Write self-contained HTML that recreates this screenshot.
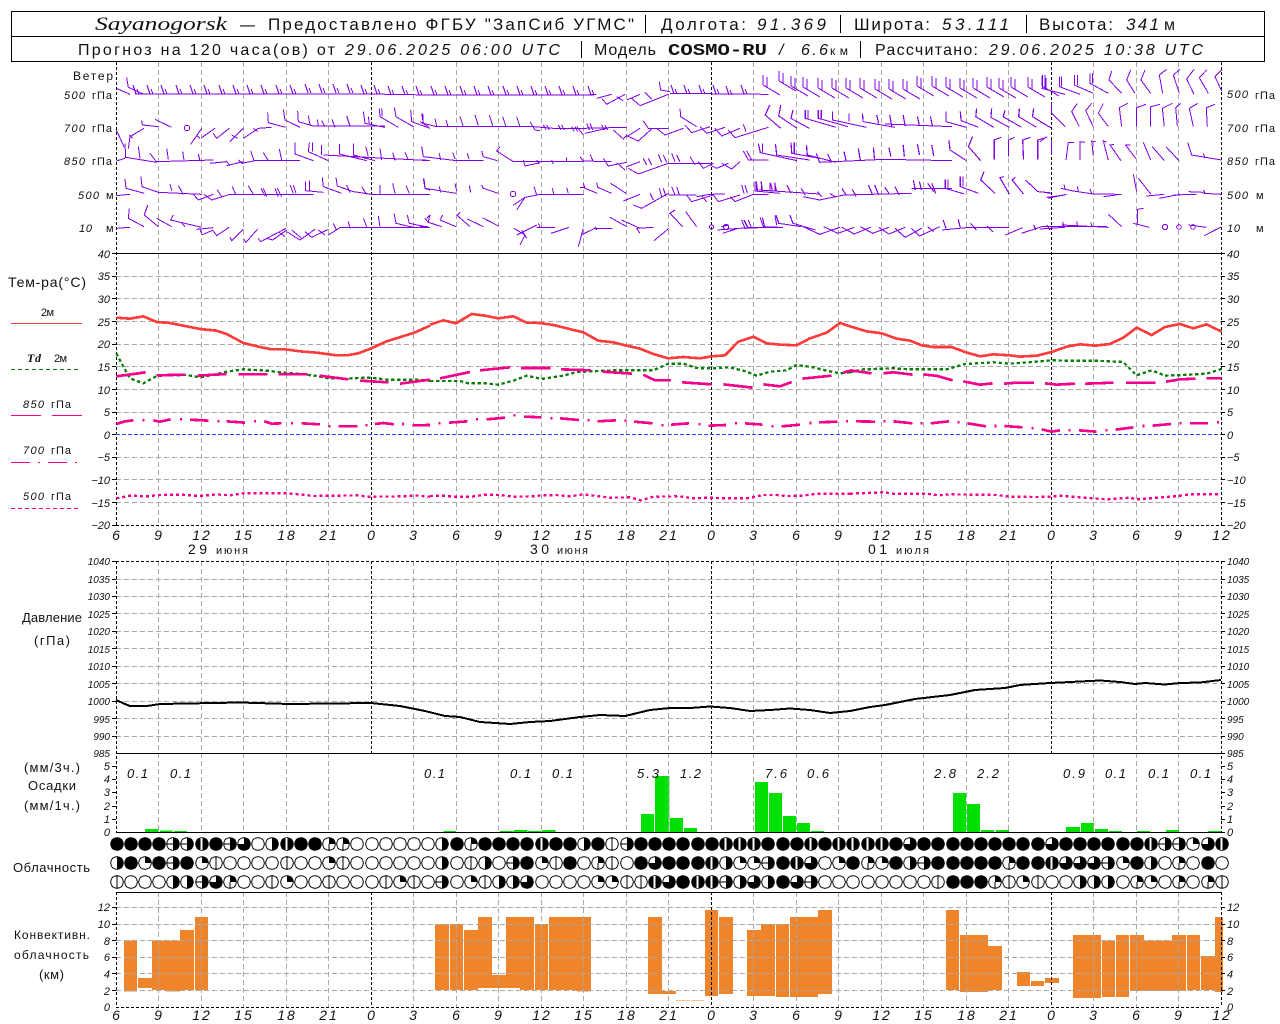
<!DOCTYPE html>
<html><head><meta charset="utf-8"><title>Sayanogorsk</title>
<style>
html,body{margin:0;padding:0;background:#fff}
svg{display:block}
text{font-family:"Liberation Sans",sans-serif;fill:#111}
.i{font-style:italic}
.n{font-size:11px;font-style:italic}
.p{font-size:10px;font-style:italic}
.a{font-size:14px;font-style:italic;text-anchor:middle;letter-spacing:2px}
.h{font-size:17px}
.s{font-size:16px}
.l{font-size:12px}
.f{fill:none}
</style></head><body>
<svg xmlns="http://www.w3.org/2000/svg" width="1280" height="1024" viewBox="0 0 1280 1024">
<defs>
<path id="v" d="M0 62V525M0 561V832M0 892V1007"/>
<path id="m" d="M0 62V525M0 561V753M0 892V1007"/>
<path id="t" d="M-1 0L-4-9M2 0L0-5"/>
<path id="d" d="M0 0L17 10M0 0V-10M4 2V-8"/>
<g id="c0"><circle r="6.3" fill="#fff" stroke="#000"/></g>
<g id="c1"><circle r="6.3" fill="#fff" stroke="#000"/><path d="M0-6V6" stroke="#000"/></g>
<g id="c2"><circle r="6.3" fill="#fff" stroke="#000"/><path d="M0 0V-6A6 6 0 0 1 6 0Z" fill="#000"/></g>
<g id="c3"><circle r="6.3" fill="#fff" stroke="#000"/><path d="M0 0V-6A6 6 0 0 1 6 0Z" fill="#000"/><path d="M0 0V6" stroke="#000"/></g>
<g id="c4"><circle r="6.3" fill="#fff" stroke="#000"/><path d="M0-6A6 6 0 0 1 0 6Z" fill="#000"/></g>
<g id="c5"><circle r="6.3" fill="#fff" stroke="#000"/><path d="M0-6A6 6 0 0 1 0 6Z" fill="#000"/><path d="M-6 0H0" stroke="#000"/></g>
<g id="c6"><circle r="6.3" fill="#fff" stroke="#000"/><path d="M0-6A6 6 0 1 1-6 0H0Z" fill="#000"/></g>
<g id="c7"><circle r="6.8" fill="#000"/><path d="M-.5-6V6" stroke="#fff" stroke-width="2"/></g>
<g id="c8"><circle r="6.8" fill="#000"/></g>
</defs>

<!-- header -->
<g shape-rendering="crispEdges" stroke="#000" fill="none">
<path d="M11.5 11.5H1264.5V61.5H11.5ZM11.5 36.5H1264.5"/>
<path d="M645.5 15V33M840.5 15V33M1026.5 15V33M581.5 41V58M860.5 41V58"/>
</g>
<g class="h">
<text x="95" y="30" font-size="19" textLength="132" lengthAdjust="spacingAndGlyphs" style="font-family:'Liberation Serif',serif;font-style:italic">Sayanogorsk</text>
<text x="240" y="30" textLength="15" lengthAdjust="spacingAndGlyphs" class="h">—</text>
<text x="268" y="30" class="h" textLength="366">Предоставлено ФГБУ "ЗапСиб УГМС"</text>
<text x="661" y="30" class="h" textLength="85">Долгота:</text>
<text x="757" y="30" class="h i" textLength="69">91.369</text>
<text x="854" y="30" class="h" textLength="76">Широта:</text>
<text x="942" y="30" class="h i" textLength="67">53.111</text>
<text x="1039" y="30" class="h" textLength="74">Высота:</text>
<text x="1126" y="30" class="h i" textLength="33">341</text>
<text x="1164" y="30" class="s" textLength="11">м</text>
</g>
<text x="78" y="55" class="s" textLength="257">Прогноз на 120 часа(ов) от</text>
<text x="345" y="55" class="s i" textLength="215">29.06.2025 06:00 UTC</text>
<text x="594" y="55" class="s" textLength="62">Модель</text>
<text x="668" y="55" font-size="17" font-weight="bold" textLength="99" lengthAdjust="spacingAndGlyphs" style="font-family:'Liberation Mono',monospace">COSMO-RU</text>
<text x="779" y="55" class="s i">/</text>
<text x="801" y="55" class="s i" textLength="27">6.6</text>
<text x="830" y="55" class="l" textLength="18">км</text>
<text x="875" y="55" class="s" textLength="103">Рассчитано:</text>
<text x="989" y="55" class="s i" textLength="214">29.06.2025 10:38 UTC</text>

<!-- bars -->
<g shape-rendering="crispEdges" fill="#00e000">
<path transform="translate(0,750) scale(.33333)" d="M435 237H475V247H435ZM480 241H517V247H480ZM522 243H561V247H522Z"/>
<path transform="translate(430,750) scale(.33333)" d="M40 243H78V247H40ZM210 243H250V247H210ZM252 240H292V247H252ZM294 243H334V247H294ZM336 240H376V247H336ZM633 192H672V247H633ZM675 78H718V247H675ZM720 204H759V247H720ZM762 234H801V247H762ZM975 96H1014V247H975ZM1017 129H1056V247H1017ZM1059 198H1098V247H1059ZM1101 219H1140V247H1101ZM1143 243H1182V247H1143Z"/>
<path transform="translate(850,750) scale(.33333)" d="M309 129H348V247H309ZM351 162H390V247H351ZM393 240H432V247H393ZM438 240H477V247H438ZM648 231H690V247H648ZM693 219H732V247H693ZM735 237H774V247H735ZM777 243H816V247H777ZM861 243H900V247H861ZM948 240H987V247H948ZM1074 243H1113V247H1074Z"/>
</g>
<g shape-rendering="crispEdges" fill="#f0842a">
<path transform="translate(0,750) scale(.33333)" d="M372 572H411V725H372ZM414 684H456V714H414ZM456 572H498V720H456ZM498 572H540V725H498ZM540 540H582V720H540ZM585 501H624V720H585Z"/>
<path transform="translate(430,750) scale(.33333)" d="M15 522H57V720H15ZM60 522H99V720H60ZM102 540H144V720H102ZM144 501H186V714H144ZM186 675H228V714H186ZM228 501H270V714H228ZM270 501H312V720H270ZM315 522H354V720H315ZM357 501H441V720H357ZM441 501H483V725H441ZM654 501H696V732H654ZM696 723H738V732H696ZM738 750H780V752H738ZM783 750H822V752H783ZM825 480H864V738H825ZM867 501H909V732H867ZM951 540H993V738H951ZM993 522H1035V738H993ZM1038 522H1077V741H1038ZM1080 501H1122V741H1080ZM1122 501H1164V741H1122ZM1164 480H1206V732H1164Z"/>
<path transform="translate(850,750) scale(.33333)" d="M288 480H327V720H288ZM330 555H372V726H330ZM372 555H414V726H372ZM414 588H456V720H414ZM501 666H540V708H501ZM543 693H582V708H543ZM585 684H627V699H585ZM669 555H711V744H669ZM711 555H753V744H711ZM756 572H795V741H756ZM798 555H837V741H798ZM840 555H882V723H840ZM882 572H924V723H882ZM924 572H966V723H924ZM966 555H1008V723H966ZM1011 555H1050V720H1011ZM1053 618H1095V720H1053ZM1095 501H1119V726H1095Z"/>
</g>

<!-- grid -->
<g shape-rendering="crispEdges" fill="none">
<g stroke="#a8a8a8" stroke-dasharray="5 3">
<path d="M116 276.5H1221M116 298.5H1221M116 321.5H1221M116 344.5H1221M116 366.5H1221M116 389.5H1221M116 412.5H1221M116 457.5H1221M116 479.5H1221M116 502.5H1221"/>
<path d="M116 579.5H1221M116 596.5H1221M116 613.5H1221M116 631.5H1221M116 648.5H1221M116 666.5H1221M116 683.5H1221M116 701.5H1221M116 718.5H1221M116 736.5H1221"/>
<path d="M116 907.5H1221M116 924.5H1221M116 940.5H1221M116 957.5H1221M116 973.5H1221M116 990.5H1221"/>
<use href="#v" x="158.5"/><use href="#v" x="201.5"/><use href="#v" x="243.5"/><use href="#v" x="286.5"/><use href="#v" x="328.5"/>
<use href="#v" x="413.5"/><use href="#v" x="456.5"/><use href="#v" x="498.5"/><use href="#v" x="541.5"/><use href="#v" x="583.5"/><use href="#v" x="626.5"/><use href="#v" x="668.5"/>
<use href="#v" x="753.5"/><use href="#v" x="796.5"/><use href="#v" x="838.5"/><use href="#v" x="881.5"/><use href="#v" x="923.5"/><use href="#v" x="966.5"/><use href="#v" x="1008.5"/>
<use href="#v" x="1093.5"/><use href="#v" x="1136.5"/><use href="#v" x="1178.5"/>
<path d="M711.5 753V832"/>
</g>
<g stroke="#000" stroke-dasharray="3 2">
<use href="#m" x="371.5"/><use href="#m" x="711.5"/><use href="#m" x="1051.5"/>
<use href="#v" x="116.5"/><use href="#v" x="1221.5"/>
<path d="M116 525.5H1221M116 561.5H1221M116 1007.5H1221"/>
</g>
<path d="M116 434.5H1221" stroke="#2a4bff" stroke-dasharray="4 2"/>
<path d="M116 253.5H1221M116 753.5H1221M116 832.5H1221M116 892.5H1221" stroke="#000"/>
<path stroke="#000" d="M112 253.5h4M112 276.5h4M112 298.5h4M112 321.5h4M112 344.5h4M112 366.5h4M112 389.5h4M112 412.5h4M112 434.5h4M112 457.5h4M112 479.5h4M112 502.5h4M112 525.5h4M112 561.5h4M112 579.5h4M112 596.5h4M112 613.5h4M112 631.5h4M112 648.5h4M112 666.5h4M112 683.5h4M112 701.5h4M112 718.5h4M112 736.5h4M112 766.5h4M112 779.5h4M112 792.5h4M112 806.5h4M112 819.5h4M112 907.5h4M112 924.5h4M112 940.5h4M112 957.5h4M112 973.5h4M112 990.5h4M1221 253.5h4M1221 276.5h4M1221 298.5h4M1221 321.5h4M1221 344.5h4M1221 366.5h4M1221 389.5h4M1221 412.5h4M1221 434.5h4M1221 457.5h4M1221 479.5h4M1221 502.5h4M1221 525.5h4M1221 561.5h4M1221 579.5h4M1221 596.5h4M1221 613.5h4M1221 631.5h4M1221 648.5h4M1221 666.5h4M1221 683.5h4M1221 701.5h4M1221 718.5h4M1221 736.5h4M1221 753.5h4M1221 766.5h4M1221 779.5h4M1221 792.5h4M1221 806.5h4M1221 819.5h4M1221 832.5h4M1221 907.5h4M1221 924.5h4M1221 940.5h4M1221 957.5h4M1221 973.5h4M1221 990.5h4"/>
</g>

<!-- wind -->
<g fill="none" stroke="#8200e6" shape-rendering="crispEdges">
<g>
<use href="#t" x="137" y="94"/><use href="#t" x="151" y="94"/><use href="#t" x="165" y="94"/><use href="#t" x="180" y="94"/><use href="#t" x="194" y="94"/><use href="#t" x="208" y="94"/><use href="#t" x="223" y="94"/><use href="#t" x="237" y="94"/><use href="#t" x="251" y="94"/><use href="#t" x="265" y="94"/><use href="#t" x="280" y="94"/><use href="#t" x="294" y="94"/><use href="#t" x="309" y="93"/><use href="#t" x="323" y="93"/><use href="#t" x="337" y="93"/><use href="#t" x="351" y="93"/><use href="#t" x="365" y="94"/><use href="#t" x="378" y="94"/><use href="#t" x="392" y="95"/><use href="#t" x="406" y="95"/><use href="#t" x="420" y="95"/><use href="#t" x="435" y="95"/><use href="#t" x="449" y="95"/><use href="#t" x="464" y="95"/><use href="#t" x="478" y="95"/><use href="#t" x="492" y="95"/><use href="#t" x="507" y="95"/><use href="#t" x="521" y="95"/><use href="#t" x="535" y="95"/><use href="#t" x="549" y="95"/><use href="#t" x="563" y="95"/><use href="#t" x="577" y="95"/><use href="#t" x="592" y="95"/>
<use href="#t" x="675" y="94"/><use href="#t" x="688" y="94"/><use href="#t" x="703" y="94"/><use href="#t" x="717" y="94"/><use href="#t" x="730" y="95"/><use href="#t" x="745" y="94"/>
<use href="#d" x="763" y="85"/><use href="#d" x="779" y="81"/><use href="#d" x="791" y="86"/><use href="#d" x="803" y="87"/><use href="#d" x="818" y="88"/><use href="#d" x="832" y="88"/><use href="#d" x="846" y="88"/><use href="#d" x="860" y="88"/><use href="#d" x="875" y="89"/><use href="#d" x="889" y="89"/><use href="#d" x="903" y="89"/><use href="#d" x="917" y="86"/><use href="#d" x="932" y="86"/><use href="#d" x="946" y="87"/><use href="#d" x="960" y="88"/><use href="#d" x="973" y="88"/><use href="#d" x="987" y="87"/><use href="#d" x="999" y="88"/><use href="#d" x="1011" y="87"/><use href="#d" x="1028" y="87"/><use href="#d" x="1042" y="86"/>
<path d="M135 94H370L430 95H594"/>
</g>
<path transform="scale(.33333)" stroke-width="3" d="M349 265L390 283M380 232L385 262L430 282
M349 390L372 440M385 445L390 410L432 385M388 405L398 415M425 362L427 375L475 380M465 358L515 382M572 433L605 385M590 405L600 415M605 413L645 385M640 400L650 415L688 385M690 425L730 385M695 405L712 415M730 415L775 385L815 382M760 385L773 395M803 337L805 368L857 382M850 328L855 360L900 382M893 333L895 365L940 378H1155M925 347L930 375M952 358L955 378M965 362L975 380M996 358L1005 382M1040 348L1050 378M1090 335L1095 370L1155 382M1105 350L1108 370M1138 325L1140 350L1195 382M1145 325L1147 350M1183 322L1188 350L1240 380M1232 330L1235 365L1290 385M1265 340L1270 370
M349 483L375 475M375 430L377 472L470 487M415 440L420 475M450 460L470 487M500 445L505 478M548 455L552 480M595 462L600 482M470 485L640 480M630 490L680 485M678 482L690 497M680 497L730 485M715 480L730 492M725 490L765 482H900M752 452L762 482M790 458L805 482M838 447L845 480M885 428V462L940 482M928 428L925 455L985 482M937 428V455M965 435V465M970 465L1290 482M1018 432V462L1100 482M1060 430V465L1125 482M1097 440L1105 470M1140 445L1145 480M1178 457L1185 482M1215 457L1225 480M1265 442L1270 470
M349 587L390 583M375 537L378 565L433 580M423 530L426 560L475 577L605 583M510 552L515 572M535 557L550 583M580 583L595 600L640 583M612 583L635 600L690 583H940M652 570L665 590M697 560L708 585M745 558L760 583M783 565L795 588M790 565L800 590M825 565L835 590M832 565L845 590M870 555L880 580M880 555L888 580M917 545V572L970 577M928 542V572M967 533L970 560L1025 580M1008 533L1012 558L1060 575L1115 583H1290M1040 555L1050 578M1085 560L1100 583M1140 555V583M1178 550L1185 580M1218 557L1228 580M1272 535L1275 565L1290 570
M349 685L390 682M388 625L385 655L432 680M443 615L433 645L475 680M470 655L515 680M520 645L512 660L605 682M545 668L555 680M590 688L640 683M600 688L605 700M605 705L640 690M640 693L650 707L687 682M690 712L695 722L730 687M732 718L738 727L773 687M775 715L782 725L858 685M800 715L818 720L860 690M835 695L855 710M860 695L900 720L945 688M875 690L905 715M915 695L935 712L985 688M955 690L975 705M985 705L1020 683H1290M1000 670L1010 690M1045 665L1050 685M1090 655L1100 680M1135 648L1140 680M1182 640L1188 670L1240 682M1222 645L1228 670L1285 682M1280 655L1290 645"/>
<circle cx="187" cy="128" r="2.7"/>
<path transform="translate(420,65) scale(.33333)" stroke-width="3" d="M495 90L530 88M530 100L575 88M545 100L560 118L615 88M590 95L610 108M620 105L660 88M635 100L660 122L745 88M675 82L695 103M718 50L722 75L750 80M750 85L1045 88
M0 170L25 185M8 145L10 175L50 185H340L400 190H490L620 187M45 160L50 185M78 165L85 188M120 155L130 185M165 150L175 182M208 150L218 182M248 155L258 185M290 155L300 185M330 170L345 195L360 197M370 180L378 195M380 180L388 195M415 180L423 195M425 180L433 195M455 185L463 200M465 185L473 200M500 175L508 195M510 175L518 195M545 180L553 195M555 180L563 195M470 185L490 210M495 205L560 190M580 195L610 222L620 210M620 215L660 190M620 212L655 228L697 190M670 168L685 190H745M710 190L735 210L790 190M780 130L782 155L830 185M795 180L815 203L870 185M840 185L860 205L915 187M885 190L905 213L960 190M925 195L945 218L1045 187M970 178L978 200
M0 285H20M5 245L10 275L110 287H190M58 265L62 285M98 262L105 282M142 265L147 282M185 258L190 275L232 287M240 245L230 258L280 290H490M310 285L315 303L360 293M350 285L358 297M395 285L400 297M440 278V290M480 275L490 288M510 268L520 290M490 288L575 290M550 280L565 303L620 292M590 293L615 315M620 305L660 290M625 310L655 327L745 295H880M670 280L680 300M685 280L695 300M715 268L725 292M730 270L740 292M755 265L765 290M770 270L780 290M810 275L825 300M835 290L850 310L880 295M870 300L890 310L925 295M905 295L935 312L960 290M970 258L985 285H1045M980 258L995 285
M0 388H20M10 340L15 370L108 385M58 365L62 382M105 355L110 378M148 362L152 382M185 360L190 370L235 385M280 420L315 397M290 435L315 397L360 388H490M342 365L350 390M397 370L402 390M440 368L445 385M490 355L495 370L532 385M480 367H495M530 352L533 367L575 385M572 355L618 385M610 408L660 388M640 420L665 430L745 385M690 385L700 405M718 370L725 395M730 370L738 395M755 365L765 390M770 365L778 390M745 390H830M830 395L870 388L915 387M800 390L815 410L880 390M845 392L860 410M880 390L895 410L960 390M930 395L945 410L1000 388H1045M965 360L972 385M975 360L982 385M1010 350V375M1025 350V375M1050 352V380M1065 352V380M1005 350V378L1080 385
M0 485H22M15 460L25 472L65 485M30 450L25 470M60 465L108 485M68 450L60 465M110 450L150 485M120 442L110 452M142 462L190 485M187 458L235 483M282 490L315 510L300 540M290 510L350 480M305 495L320 520M350 487H405M355 475L360 487M393 505L447 487M475 545L490 490M483 510L525 490H577M525 485L530 495M570 457L620 485M605 465L660 490M650 490L700 487M650 490L660 505M702 527L747 490M765 435L750 445L788 485M797 440L830 485M908 505L955 490M905 485L925 480M965 465L975 490L1040 487M985 465L995 490M1020 457L1030 485L1080 487M1065 452L1070 480"/>
<circle cx="711.5" cy="227" r="2" /><circle cx="726" cy="227" r="2.6"/><circle cx="513" cy="194" r="2.7"/>
<path transform="translate(640,0) scale(.408,.33333)" stroke-width="3" d="M318 315L307 345L345 385M345 315L340 348L385 385M375 330L370 355L415 385M405 330L405 355L480 382M412 330V355M437 330L437 355L510 380M444 330V355M472 335L472 360L555 382M512 340L512 365M545 340L547 365L625 382M580 345L585 370M612 345L617 378M645 345L650 378M680 350L685 378M712 350L717 380M600 372L765 380M750 335L750 365L800 382M785 335L787 362L830 382M825 325L823 350L867 382M862 325L860 352L905 382M895 330L890 350L935 382M930 325L928 350L972 382M965 325L962 350L1005 382
M290 430L295 458L385 482M300 430V458M332 432L335 465L415 480M370 428L372 460L440 475M378 428V460M408 435L410 465L480 487M432 460L440 487M460 462L470 487M500 455L505 482M535 445L540 480M572 442L575 480M610 442L615 470M645 435L648 470M680 432L685 465M715 435L720 468M440 487L600 478L765 482M757 420L760 450L800 482M815 410L805 440L835 482M885 412L868 420V478M918 412L903 420V470M957 412L938 420L940 478M997 412L975 420V478
M285 545L288 575M297 545L300 575M320 550L325 575M330 550L335 575M360 555L370 580M395 565L405 585M435 575L445 590M495 565L505 585M520 568L530 590M560 555L570 585M575 555L585 585M600 562L610 580M625 560L635 585M670 540L675 570M685 545L690 570M705 550L720 575M715 550L725 580M290 570L440 582M400 590L440 600L500 585M465 580L480 592M500 585L665 580M665 565H765M748 538V565L795 582M755 538V565M785 530V560L830 580M792 530V560M843 515L835 540L870 580M892 530L882 533L905 582M920 532L912 540L940 582M945 540L975 575L1005 578M1000 595L1045 583
M190 690L265 683H350M255 660L265 685M300 652L305 680M333 645L340 670L395 680M367 645L375 670L430 690M400 680L440 703L490 682M450 680L485 700L525 682M495 682L525 702L565 682M540 680L570 700L610 682M585 682L610 702L650 682M625 685L650 712L690 685M665 685L685 708L735 680M705 680L720 695M740 690L800 683H905M743 660L750 685M780 658L785 682M810 670L825 690M850 678L865 695M895 705L938 683M935 700L985 680H1145M965 675L970 690"/>
<path transform="translate(1040,65) scale(.33333)" stroke-width="3" d="M215 18L207 45L245 85M272 15L260 45L285 85M315 15L303 45L332 85M380 13L358 30L368 85M420 13L400 30L418 85M462 13L440 42L462 88M500 15L478 38L505 85M545 15L525 35L545 78M8 30V70M15 30V70M5 70L75 88M58 35V65L120 88M65 35V65M103 30V60L160 85M112 30V60M150 25V55L205 85M158 25V55
M35 115V145L75 185M112 115L95 140L118 185M155 115L137 137L160 185M190 115L175 145L205 185M263 115L238 128L245 185M318 118L290 128V185M360 118L332 125V185M397 115L367 130L373 185M422 115L407 128L412 183M473 115L448 130L460 185M525 118L499 128L502 185M0 170L33 188
M0 230L20 215M35 225V270M102 232H85L78 285M135 232L120 230V285M167 230L155 228L160 272M200 232L190 228L205 285M222 238L210 240L243 287M272 240L257 240L287 280M310 232L332 285M337 245L373 287M378 245L417 287M443 232L455 270L545 285M490 265L495 280
M0 380L33 385M20 397L75 390M63 370L100 378L160 387M72 358L75 372M112 365L115 378M150 372L155 385M155 387L245 388M190 395L230 390M280 328L290 380M295 340L333 388M320 393L372 388M358 400L420 388M400 390L470 388M445 380L490 382M490 385L545 388M490 375L495 385M415 385L418 392
M0 492L75 487M20 480L30 495M65 480L205 487M68 470L72 485M110 470L113 485M152 472L157 485M205 448L245 485M310 430L292 433V475M280 475L328 487M445 480L500 487M493 512L545 485"/>
<circle cx="1165" cy="227" r="2.6"/><circle cx="1179" cy="227" r="2.3"/><circle cx="1193" cy="227" r="2.3"/>
</g>

<!-- temperature curves -->
<g fill="none" shape-rendering="crispEdges" stroke-linejoin="round">
<g transform="translate(0,250) scale(.33333)" stroke-width="8">
<path stroke="#0a7d0a" stroke-width="7" stroke-dasharray="10 8" d="M349 310L370 350L390 385L430 400L470 378L510 376L560 375L600 382L650 372L680 365L730 358L800 362L850 368L900 372L950 378L985 385L1040 386L1075 384L1114 383L1160 389L1243 389L1290 392"/>
<path stroke="#f5008c" d="M349 379L437 367M470 376L555 374M592 377L680 372M715 373H803M835 373H922M958 377L1045 388M1080 392L1165 397M1200 401L1290 389M349 522L375 514L400 511M428 511H434M460 511L480 515L512 508M540 508H546M570 509L625 512M652 514H658M680 514L735 518M762 514H768M793 514L815 521L845 520M873 520H879M905 520L960 523M985 529H991M1015 529H1072M1096 526H1102M1125 522L1150 519L1182 523M1206 522H1212M1237 526L1290 525"/>
<path stroke="#f5008c" stroke-width="7" stroke-dasharray="9 9" d="M349 745L390 737L440 739L480 735L540 734L600 738L650 733L690 736L730 730H860L900 733L940 738L1075 736L1100 740L1220 739L1243 736L1290 740"/>
<path stroke="#ff3c3c" d="M349 203L390 206L430 199L470 216L510 219L550 227L600 237L650 242L680 252L730 279L780 291L815 298H855L900 304L950 308L1010 316H1040L1075 310L1114 295L1160 274L1243 248L1290 227"/>
</g>
<g transform="translate(430,250) scale(.33333)" stroke-width="8">
<path stroke="#0a7d0a" stroke-width="7" stroke-dasharray="10 8" d="M0 393H90L115 400H165L205 404L250 392L290 377L335 387L400 377L440 366L480 364L550 361H670L715 341H760L800 354L845 355L900 352L950 365L980 377L1020 365L1070 361L1100 345L1150 352L1190 362L1230 370L1260 367"/>
<path stroke="#f5008c" d="M30 385L120 366M150 361L240 352M273 354H362M393 358L483 361M518 365L606 371M640 374L675 391H723M756 397L845 403M880 403L968 413M1000 403L1050 409L1085 396M1117 386L1205 377M1240 368L1260 362M26 520H32M57 518L113 514M138 508H144M170 508L225 503M250 496H256M282 500L333 502M361 505H367M390 505L447 510M472 511H478M502 514L558 511M583 512H589M612 515L668 520M694 526H700M723 524L777 520M805 523H811M835 527L888 525M915 520H921M945 520L998 524M1025 529H1031M1055 529L1110 524M1138 519H1144M1167 517L1222 515M1248 514H1254"/>
<path stroke="#f5008c" stroke-width="7" stroke-dasharray="9 9" d="M0 738L40 737L70 740H125L165 734L210 735L250 740L310 739L335 736L380 735L420 739L460 733L500 738L540 743L600 742L633 751L670 740L750 739L790 745L840 743L880 745H950L1000 735H1040L1070 738L1120 737L1160 731H1260"/>
<path stroke="#ff3c3c" d="M0 224L40 211L78 220L125 192L165 197L205 205L250 199L290 218L330 219L370 225L410 235L460 247L505 272L550 277L590 287L630 296L670 312L715 325L760 321L810 325L845 319L885 316L925 275L970 260L1010 280L1050 284L1100 286L1140 265L1190 248L1230 219L1260 229"/>
</g>
<g transform="translate(850,250) scale(.33333)" stroke-width="8">
<path stroke="#0a7d0a" stroke-width="7" stroke-dasharray="10 8" d="M0 367L40 358L130 355L180 358H290L345 342L430 337L480 341L520 338L605 331L650 332H735L820 336L860 376L905 361L945 377L1000 375L1070 371L1115 357"/>
<path stroke="#f5008c" d="M0 361L65 370M100 370L130 367L188 374M220 373L262 378L308 391M340 394L390 404L428 400M462 401L500 398H552M585 400L620 404L675 401M705 401L790 398M828 398H917M948 395L990 388L1036 386M1070 385H1115M18 514L75 515M100 514H106M130 514L187 520M211 520H217M242 520L297 514M322 517H328M352 520L408 529M433 528H439M463 528L518 532M544 535H550M575 538L605 545L630 541M655 541H661M687 541L740 545M766 541H772M797 539L850 532M877 528H883M908 527L963 522M988 520H994M1020 520H1074M1101 517H1107"/>
<path stroke="#f5008c" stroke-width="7" stroke-dasharray="9 9" d="M0 731L100 727L130 731H230L265 736L300 733L440 735L480 740L560 741L605 740L630 737L680 741L770 748L840 743L860 748L900 745L950 741L1000 736L1020 733H1110"/>
<path stroke="#ff3c3c" d="M0 229L50 244L95 250L140 266L180 272L215 286L250 291H305L345 306L390 319L430 313L480 316L510 320L560 317L605 306L650 290L690 283L735 287L780 282L820 263L860 233L905 255L945 231L990 222L1030 235L1070 223L1115 245"/>
</g>
<path stroke="#000" stroke-width="2" d="M116 700L125 704L130 706H147L160 704L240 702.5L290 704L371 703L400 706L425 711L445 716L460 717L480 722L510 724L530 722L550 721L580 717L600 715L625 716L650 710L670 708H690L710 706.5L730 708L750 711L770 710L790 708.5L810 710L830 713L850 711L870 707L885 705L915 699L950 695L975 690L1005 688L1020 685L1050 683L1080 681.5L1100 680.5L1120 682L1135 684L1145 683L1165 684.5L1180 683L1200 682.5L1221 680"/>
<!-- legend lines -->
<path stroke="#ff3c3c" d="M11 323.5H82"/>
<path stroke="#0a7d0a" stroke-dasharray="4 3" d="M11 369.5H78"/>
<path stroke="#f5008c" d="M11 415.5H41M52 415.5H82M11 462.5H30M38 462.5H40M48 462.5H67M75 462.5H77"/>
<path stroke="#f5008c" stroke-dasharray="4 3" d="M11 508.5H78"/>
</g>

<!-- clouds -->
<g shape-rendering="crispEdges">
<g transform="translate(0,844)">
<use href="#c8" x="117"/><use href="#c8" x="131"/><use href="#c8" x="145"/><use href="#c8" x="159"/><use href="#c5" x="173"/><use href="#c5" x="187"/><use href="#c7" x="202"/><use href="#c8" x="216"/><use href="#c5" x="230"/><use href="#c6" x="244"/><use href="#c0" x="258"/><use href="#c4" x="272"/><use href="#c7" x="287"/><use href="#c8" x="301"/><use href="#c8" x="315"/><use href="#c3" x="329"/><use href="#c3" x="343"/><use href="#c0" x="357"/><use href="#c0" x="372"/><use href="#c0" x="386"/><use href="#c0" x="400"/><use href="#c0" x="414"/><use href="#c0" x="428"/><use href="#c4" x="442"/><use href="#c8" x="457"/><use href="#c3" x="471"/><use href="#c8" x="485"/><use href="#c8" x="499"/><use href="#c8" x="513"/><use href="#c8" x="527"/><use href="#c7" x="542"/><use href="#c8" x="556"/><use href="#c8" x="570"/><use href="#c4" x="584"/><use href="#c8" x="598"/><use href="#c1" x="612"/><use href="#c5" x="627"/><use href="#c8" x="641"/><use href="#c8" x="655"/><use href="#c8" x="669"/><use href="#c8" x="683"/><use href="#c8" x="698"/><use href="#c8" x="712"/><use href="#c7" x="726"/><use href="#c7" x="740"/><use href="#c7" x="754"/><use href="#c8" x="768"/><use href="#c8" x="783"/><use href="#c8" x="797"/><use href="#c7" x="811"/><use href="#c8" x="825"/><use href="#c7" x="839"/><use href="#c7" x="853"/><use href="#c7" x="868"/><use href="#c7" x="882"/><use href="#c8" x="896"/><use href="#c6" x="910"/><use href="#c8" x="924"/><use href="#c8" x="938"/><use href="#c8" x="953"/><use href="#c8" x="967"/><use href="#c8" x="981"/><use href="#c8" x="995"/><use href="#c8" x="1009"/><use href="#c8" x="1023"/><use href="#c8" x="1038"/><use href="#c6" x="1052"/><use href="#c8" x="1066"/><use href="#c8" x="1080"/><use href="#c8" x="1094"/><use href="#c8" x="1108"/><use href="#c8" x="1123"/><use href="#c8" x="1137"/><use href="#c7" x="1151"/><use href="#c5" x="1165"/><use href="#c5" x="1179"/><use href="#c2" x="1193"/><use href="#c6" x="1208"/><use href="#c7" x="1222"/>
</g>
<g transform="translate(0,863)">
<use href="#c4" x="117"/><use href="#c8" x="131"/><use href="#c2" x="145"/><use href="#c8" x="159"/><use href="#c5" x="173"/><use href="#c8" x="187"/><use href="#c2" x="202"/><use href="#c1" x="216"/><use href="#c0" x="230"/><use href="#c0" x="244"/><use href="#c0" x="258"/><use href="#c0" x="272"/><use href="#c1" x="287"/><use href="#c0" x="301"/><use href="#c0" x="315"/><use href="#c2" x="329"/><use href="#c1" x="343"/><use href="#c0" x="357"/><use href="#c0" x="372"/><use href="#c0" x="386"/><use href="#c0" x="400"/><use href="#c0" x="414"/><use href="#c0" x="428"/><use href="#c4" x="442"/><use href="#c0" x="457"/><use href="#c1" x="471"/><use href="#c4" x="485"/><use href="#c0" x="499"/><use href="#c5" x="513"/><use href="#c8" x="527"/><use href="#c2" x="542"/><use href="#c1" x="556"/><use href="#c8" x="570"/><use href="#c0" x="584"/><use href="#c3" x="598"/><use href="#c1" x="612"/><use href="#c0" x="627"/><use href="#c8" x="641"/><use href="#c6" x="655"/><use href="#c8" x="669"/><use href="#c8" x="683"/><use href="#c8" x="698"/><use href="#c7" x="712"/><use href="#c4" x="726"/><use href="#c2" x="740"/><use href="#c2" x="754"/><use href="#c5" x="768"/><use href="#c8" x="783"/><use href="#c7" x="797"/><use href="#c6" x="811"/><use href="#c0" x="825"/><use href="#c2" x="839"/><use href="#c8" x="853"/><use href="#c3" x="868"/><use href="#c2" x="882"/><use href="#c8" x="896"/><use href="#c4" x="910"/><use href="#c5" x="924"/><use href="#c8" x="938"/><use href="#c8" x="953"/><use href="#c8" x="967"/><use href="#c8" x="981"/><use href="#c8" x="995"/><use href="#c3" x="1009"/><use href="#c8" x="1023"/><use href="#c8" x="1038"/><use href="#c7" x="1052"/><use href="#c6" x="1066"/><use href="#c6" x="1080"/><use href="#c6" x="1094"/><use href="#c5" x="1108"/><use href="#c2" x="1123"/><use href="#c8" x="1137"/><use href="#c4" x="1151"/><use href="#c0" x="1165"/><use href="#c3" x="1179"/><use href="#c0" x="1193"/><use href="#c8" x="1208"/><use href="#c0" x="1222"/>
</g>
<g transform="translate(0,882)">
<use href="#c1" x="117"/><use href="#c0" x="131"/><use href="#c0" x="145"/><use href="#c0" x="159"/><use href="#c4" x="173"/><use href="#c4" x="187"/><use href="#c5" x="202"/><use href="#c6" x="216"/><use href="#c3" x="230"/><use href="#c0" x="244"/><use href="#c0" x="258"/><use href="#c1" x="272"/><use href="#c2" x="287"/><use href="#c0" x="301"/><use href="#c0" x="315"/><use href="#c1" x="329"/><use href="#c0" x="343"/><use href="#c0" x="357"/><use href="#c0" x="372"/><use href="#c1" x="386"/><use href="#c2" x="400"/><use href="#c1" x="414"/><use href="#c0" x="428"/><use href="#c5" x="442"/><use href="#c0" x="457"/><use href="#c2" x="471"/><use href="#c1" x="485"/><use href="#c4" x="499"/><use href="#c4" x="513"/><use href="#c6" x="527"/><use href="#c0" x="542"/><use href="#c0" x="556"/><use href="#c0" x="570"/><use href="#c0" x="584"/><use href="#c2" x="598"/><use href="#c2" x="612"/><use href="#c1" x="627"/><use href="#c1" x="641"/><use href="#c7" x="655"/><use href="#c6" x="669"/><use href="#c8" x="683"/><use href="#c7" x="698"/><use href="#c7" x="712"/><use href="#c5" x="726"/><use href="#c4" x="740"/><use href="#c6" x="754"/><use href="#c4" x="768"/><use href="#c8" x="783"/><use href="#c6" x="797"/><use href="#c5" x="811"/><use href="#c0" x="825"/><use href="#c0" x="839"/><use href="#c0" x="853"/><use href="#c0" x="868"/><use href="#c0" x="882"/><use href="#c0" x="896"/><use href="#c0" x="910"/><use href="#c0" x="924"/><use href="#c1" x="938"/><use href="#c8" x="953"/><use href="#c8" x="967"/><use href="#c8" x="981"/><use href="#c3" x="995"/><use href="#c1" x="1009"/><use href="#c2" x="1023"/><use href="#c1" x="1038"/><use href="#c0" x="1052"/><use href="#c0" x="1066"/><use href="#c4" x="1080"/><use href="#c4" x="1094"/><use href="#c4" x="1108"/><use href="#c0" x="1123"/><use href="#c3" x="1137"/><use href="#c2" x="1151"/><use href="#c0" x="1165"/><use href="#c3" x="1179"/><use href="#c0" x="1193"/><use href="#c3" x="1208"/><use href="#c1" x="1222"/>
</g>
</g>

<!-- wind labels -->
<text x="73" y="80" class="l" textLength="40">Ветер</text>
<g class="n">
<text x="64" y="99" class="n" textLength="21">500</text>
<text x="64" y="132" class="n" textLength="21">700</text>
<text x="64" y="165" class="n" textLength="21">850</text>
<text x="78" y="199" class="n" textLength="21">500</text>
<text x="79" y="232" class="n" textLength="13">10</text>
<text x="1227" y="98" class="n" textLength="21">500</text>
<text x="1227" y="132" class="n" textLength="21">700</text>
<text x="1227" y="165" class="n" textLength="21">850</text>
<text x="1227" y="199" class="n" textLength="21">500</text>
<text x="1227" y="232" class="n" textLength="13">10</text>
</g>
<g font-size="11">
<text x="92" y="99" textLength="20">гПа</text><text x="92" y="132" textLength="20">гПа</text><text x="92" y="165" textLength="20">гПа</text>
<text x="106" y="199">м</text><text x="106" y="232">м</text>
<text x="1255" y="99" textLength="20">гПа</text><text x="1255" y="132" textLength="20">гПа</text><text x="1255" y="165" textLength="20">гПа</text>
<text x="1256" y="199">м</text><text x="1256" y="232">м</text>
</g>

<!-- T legend -->
<text x="8" y="287" font-size="14" textLength="78">Тем-ра(°С)</text>
<text x="41" y="316" font-size="11" textLength="13">2м</text>
<text x="27" y="362" font-size="12" font-weight="bold" style="font-family:'Liberation Serif',serif;font-style:italic" textLength="14">Td</text>
<text x="54" y="362" font-size="11" textLength="13">2м</text>
<text x="23" y="408" class="n" textLength="21">850</text><text x="51" y="408" font-size="11" textLength="20">гПа</text>
<text x="23" y="454" class="n" textLength="21">700</text><text x="51" y="454" font-size="11" textLength="20">гПа</text>
<text x="23" y="500" class="n" textLength="21">500</text><text x="51" y="500" font-size="11" textLength="20">гПа</text>

<!-- left T labels -->
<g class="n" text-anchor="end">
<text x="110" y="258">40</text><text x="110" y="280">35</text><text x="110" y="303">30</text><text x="110" y="326">25</text><text x="110" y="348">20</text><text x="110" y="371">15</text><text x="110" y="394">10</text><text x="110" y="416">5</text><text x="110" y="439">0</text><text x="110" y="461">−5</text><text x="110" y="484">−10</text><text x="110" y="507">−15</text><text x="110" y="529">−20</text>
</g>
<g class="n">
<text x="1227" y="258">40</text><text x="1227" y="280">35</text><text x="1227" y="303">30</text><text x="1227" y="326">25</text><text x="1227" y="348">20</text><text x="1227" y="371">15</text><text x="1227" y="394">10</text><text x="1227" y="416">5</text><text x="1227" y="439">0</text><text x="1227" y="461">−5</text><text x="1227" y="484">−10</text><text x="1227" y="507">−15</text><text x="1227" y="529">−20</text>
</g>

<!-- pressure labels -->
<g class="p" text-anchor="end">
<text x="110" y="565">1040</text><text x="110" y="583">1035</text><text x="110" y="600">1030</text><text x="110" y="618">1025</text><text x="110" y="635">1020</text><text x="110" y="653">1015</text><text x="110" y="670">1010</text><text x="110" y="688">1005</text><text x="110" y="705">1000</text><text x="110" y="723">995</text><text x="110" y="740">990</text><text x="110" y="757">985</text>
</g>
<g class="p">
<text x="1227" y="565">1040</text><text x="1227" y="583">1035</text><text x="1227" y="600">1030</text><text x="1227" y="618">1025</text><text x="1227" y="635">1020</text><text x="1227" y="653">1015</text><text x="1227" y="670">1010</text><text x="1227" y="688">1005</text><text x="1227" y="705">1000</text><text x="1227" y="723">995</text><text x="1227" y="740">990</text><text x="1227" y="757">985</text>
</g>
<text x="22" y="622" font-size="13" textLength="60">Давление</text>
<text x="34" y="645" font-size="13" textLength="36">(гПа)</text>

<!-- precip labels -->
<g class="n" text-anchor="end">
<text x="110" y="770">5</text><text x="110" y="783">4</text><text x="110" y="796">3</text><text x="110" y="810">2</text><text x="110" y="823">1</text><text x="110" y="836">0</text>
</g>
<g class="n">
<text x="1227" y="770">5</text><text x="1227" y="783">4</text><text x="1227" y="796">3</text><text x="1227" y="810">2</text><text x="1227" y="823">1</text><text x="1227" y="836">0</text>
</g>
<text x="24" y="772" font-size="13" textLength="56">(мм/3ч.)</text>
<text x="28" y="790" font-size="13" textLength="48">Осадки</text>
<text x="24" y="810" font-size="13" textLength="56">(мм/1ч.)</text>
<g font-size="13" font-style="italic">
<text x="127" y="778" textLength="21">0.1</text><text x="170" y="778" textLength="21">0.1</text><text x="424" y="778" textLength="21">0.1</text><text x="510" y="778" textLength="21">0.1</text><text x="552" y="778" textLength="21">0.1</text><text x="637" y="778" textLength="22">5.3</text><text x="680" y="778" textLength="21">1.2</text><text x="765" y="778" textLength="22">7.6</text><text x="807" y="778" textLength="22">0.6</text><text x="934" y="778" textLength="22">2.8</text><text x="977" y="778" textLength="22">2.2</text><text x="1063" y="778" textLength="22">0.9</text><text x="1105" y="778" textLength="21">0.1</text><text x="1148" y="778" textLength="21">0.1</text><text x="1190" y="778" textLength="21">0.1</text>
</g>
<text x="13" y="872" font-size="13" textLength="77">Облачность</text>
<text x="14" y="939" font-size="12" textLength="76">Конвективн.</text>
<text x="14" y="959" font-size="12" textLength="75">облачность</text>
<text x="39" y="979" font-size="13" textLength="25">(км)</text>

<!-- conv labels -->
<g class="n" text-anchor="end">
<text x="110" y="911">12</text><text x="110" y="928">10</text><text x="110" y="945">8</text><text x="110" y="961">6</text><text x="110" y="978">4</text><text x="110" y="995">2</text><text x="110" y="1011">0</text>
</g>
<g class="n">
<text x="1227" y="911">12</text><text x="1227" y="928">10</text><text x="1227" y="945">8</text><text x="1227" y="961">6</text><text x="1227" y="978">4</text><text x="1227" y="995">2</text><text x="1227" y="1011">0</text>
</g>

<!-- x axes -->
<g transform="translate(0,540)">
<text class="a" x="117">6</text><text class="a" x="159">9</text><text class="a" x="202">12</text><text class="a" x="244">15</text><text class="a" x="287">18</text><text class="a" x="329">21</text><text class="a" x="372">0</text><text class="a" x="414">3</text><text class="a" x="457">6</text><text class="a" x="499">9</text><text class="a" x="542">12</text><text class="a" x="584">15</text><text class="a" x="627">18</text><text class="a" x="669">21</text><text class="a" x="712">0</text><text class="a" x="754">3</text><text class="a" x="797">6</text><text class="a" x="839">9</text><text class="a" x="882">12</text><text class="a" x="924">15</text><text class="a" x="967">18</text><text class="a" x="1009">21</text><text class="a" x="1052">0</text><text class="a" x="1094">3</text><text class="a" x="1137">6</text><text class="a" x="1179">9</text><text class="a" x="1222">12</text>
</g>
<g transform="translate(0,1020)">
<text class="a" x="117">6</text><text class="a" x="159">9</text><text class="a" x="202">12</text><text class="a" x="244">15</text><text class="a" x="287">18</text><text class="a" x="329">21</text><text class="a" x="372">0</text><text class="a" x="414">3</text><text class="a" x="457">6</text><text class="a" x="499">9</text><text class="a" x="542">12</text><text class="a" x="584">15</text><text class="a" x="627">18</text><text class="a" x="669">21</text><text class="a" x="712">0</text><text class="a" x="754">3</text><text class="a" x="797">6</text><text class="a" x="839">9</text><text class="a" x="882">12</text><text class="a" x="924">15</text><text class="a" x="967">18</text><text class="a" x="1009">21</text><text class="a" x="1052">0</text><text class="a" x="1094">3</text><text class="a" x="1137">6</text><text class="a" x="1179">9</text><text class="a" x="1222">12</text>
</g>
<g font-size="14">
<text x="188" y="554" textLength="19">29</text><text x="530" y="554" textLength="19">30</text><text x="868" y="554" textLength="19">01</text>
</g>
<g font-size="11">
<text x="216" y="554" textLength="32">июня</text><text x="557" y="554" textLength="31">июня</text><text x="896" y="554" textLength="33">июля</text>
</g>
</svg>
</body></html>
